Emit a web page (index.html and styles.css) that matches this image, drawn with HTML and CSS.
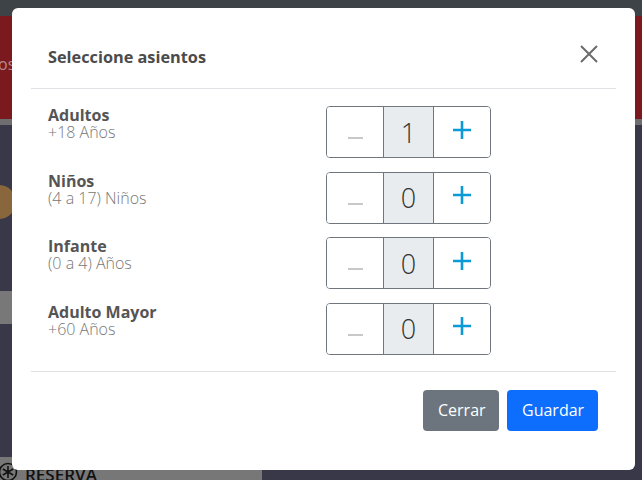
FILE: index.html
```html
<!DOCTYPE html>
<html lang="es">
<head>
<meta charset="utf-8">
<title>Seleccione asientos</title>
<link rel="stylesheet" href="styles.css">
</head>
<body>
<div class="page">
  <div class="topbar"></div>
  <div class="hero"><span class="hero-text">os</span></div>
  <div class="hero-line"></div>
  <div class="main">
    <div class="blob"></div>
    <div class="band"></div>
    <div class="reserva">
      <span class="reserva-icon">
        <svg width="20" height="20" viewBox="0 0 20 20"><circle cx="9" cy="10" r="8.5" fill="none" stroke="#111" stroke-width="1.6"/><path d="M9 4v12M3.8 7l10.4 6M3.8 13l10.4-6" stroke="#111" stroke-width="1.6"/></svg>
      </span>
      <span class="reserva-text">RESERVA</span>
    </div>
  </div>
</div>

<div class="modal">
  <div class="modal-header">
    <h5 class="modal-title">Seleccione asientos</h5>
    <button class="btn-close" aria-label="Close">
      <svg width="18" height="18" viewBox="0 0 18 18"><path d="M1 1l16 16M17 1L1 17" stroke="#6b6b6b" stroke-width="2"/></svg>
    </button>
  </div>
  <div class="modal-body">
    <div class="seat-row">
      <div class="seat-label"><div class="seat-name">Adultos</div><div class="seat-desc">+18 Años</div></div>
      <div class="counter">
        <button class="cbtn minus"><span class="minus-bar"></span></button>
        <div class="cval">1</div>
        <button class="cbtn plus"><svg width="18" height="18" viewBox="0 0 18 18"><path d="M9 0v18M0 9h18" stroke="#0b9ad6" stroke-width="2.6"/></svg></button>
      </div>
    </div>
    <div class="seat-row">
      <div class="seat-label"><div class="seat-name">Niños</div><div class="seat-desc">(4 a 17) Niños</div></div>
      <div class="counter">
        <button class="cbtn minus"><span class="minus-bar"></span></button>
        <div class="cval">0</div>
        <button class="cbtn plus"><svg width="18" height="18" viewBox="0 0 18 18"><path d="M9 0v18M0 9h18" stroke="#0b9ad6" stroke-width="2.6"/></svg></button>
      </div>
    </div>
    <div class="seat-row">
      <div class="seat-label"><div class="seat-name">Infante</div><div class="seat-desc">(0 a 4) Años</div></div>
      <div class="counter">
        <button class="cbtn minus"><span class="minus-bar"></span></button>
        <div class="cval">0</div>
        <button class="cbtn plus"><svg width="18" height="18" viewBox="0 0 18 18"><path d="M9 0v18M0 9h18" stroke="#0b9ad6" stroke-width="2.6"/></svg></button>
      </div>
    </div>
    <div class="seat-row">
      <div class="seat-label"><div class="seat-name">Adulto Mayor</div><div class="seat-desc">+60 Años</div></div>
      <div class="counter">
        <button class="cbtn minus"><span class="minus-bar"></span></button>
        <div class="cval">0</div>
        <button class="cbtn plus"><svg width="18" height="18" viewBox="0 0 18 18"><path d="M9 0v18M0 9h18" stroke="#0b9ad6" stroke-width="2.6"/></svg></button>
      </div>
    </div>
  </div>
  <div class="modal-footer">
    <button class="btn btn-secondary">Cerrar</button>
    <button class="btn btn-primary">Guardar</button>
  </div>
</div>
</body>
</html>
```

FILE: styles.css
```css
* { box-sizing: border-box; }
html, body { margin: 0; padding: 0; }
body {
  width: 642px;
  height: 480px;
  overflow: hidden;
  position: relative;
  font-family: "Open Sans", "Noto Sans", sans-serif;
  background: #393848;
}
.page { display: flex; flex-direction: column; height: 480px; }
.topbar { height: 16px; background: #3e4347; }
.hero { height: 103px; background: #7b1a1e; display: flex; align-items: center; }
.hero-text { color: #b88a8c; font-size: 16px; margin-left: -2px; margin-top: -8px; }
.hero-line { height: 6px; background: #6e6e70; }
.main { flex: 1; position: relative; background: #393848; }
.blob {
  position: absolute; left: -18px; top: 60px;
  width: 34px; height: 34px; border-radius: 50%;
  background: #8a663c;
}
.band {
  position: absolute; left: -20px; top: 166px;
  width: 60px; height: 33px; border-radius: 18px 0 0 0;
  background: #787878;
}
.reserva {
  position: absolute; left: 0; bottom: 0;
  width: 262px; height: 23px; background: #777;
  display: flex; align-items: center; gap: 6px;
}
.reserva-icon { display: flex; margin-left: -1px; margin-top: 6px; }
.reserva-text { font-size: 17px; line-height: 20px; font-weight: 600; color: #111; margin-top: 12px; }

.modal {
  position: absolute;
  left: 12px; top: 8px;
  width: 623px; height: 462px;
  background: #fff;
  border-radius: 6px;
  padding: 19px;
  display: flex; flex-direction: column;
}
.modal-header {
  display: flex; align-items: center;
  padding: 16px 18px 16px 17px;
  border-bottom: 1px solid #dfe1e4;
}
.modal-title {
  margin: 0;
  font-size: 16.3px;
  line-height: 29px;
  font-weight: 700;
  color: #4b4b4b;
}
.btn-close {
  margin-left: auto;
  margin-top: -8px;
  border: 0; background: none; padding: 0;
  width: 18px; height: 18px;
  display: flex;
}
.modal-body {
  padding: 17px 16px 16px 17px;
  display: flex; flex-direction: column; gap: 13.67px;
}
.seat-row {
  display: grid;
  grid-template-columns: 278px 165px;
  align-items: start;
}
.seat-name {
  font-size: 16px; line-height: 17px; font-weight: 700; color: #555;
  margin-top: 1px;
}
.seat-desc {
  font-size: 16px; line-height: 17px; font-weight: 300; color: #777;
}
.counter {
  display: grid;
  grid-template-columns: 57px 49px 1fr;
  height: 52px;
  border: 1px solid #6f767d;
  border-radius: 4px;
  overflow: hidden;
}
.cbtn {
  border: 0; background: #fff; padding: 0; margin: 0;
  display: flex; align-items: center; justify-content: center;
}
.minus { border-right: 1px solid #6f767d; }
.minus-bar { display: block; width: 15px; height: 2px; background: #c8c8c8; margin-top: 12px; margin-left: 1px; }
.plus { border-left: 1px solid #6f767d; }
.plus svg { margin-top: -5px; }
.cval {
  background: #e9ecef;
  display: flex; align-items: center; justify-content: center;
  font-size: 27px; font-weight: 300; color: #333;
}
.modal-footer {
  border-top: 1px solid #dfe1e4;
  display: flex; justify-content: flex-end; gap: 8px;
  padding: 18px 18px 0 0;
}
.btn {
  height: 41px;
  padding: 0 15px;
  border: 0; border-radius: 4px;
  font-family: "Open Sans", "Noto Sans", sans-serif;
  font-size: 16px; color: #fff;
}
.btn-secondary { background: #6c757d; width: 76px; }
.btn-primary { background: #0d6efd; width: 91px; }
```
